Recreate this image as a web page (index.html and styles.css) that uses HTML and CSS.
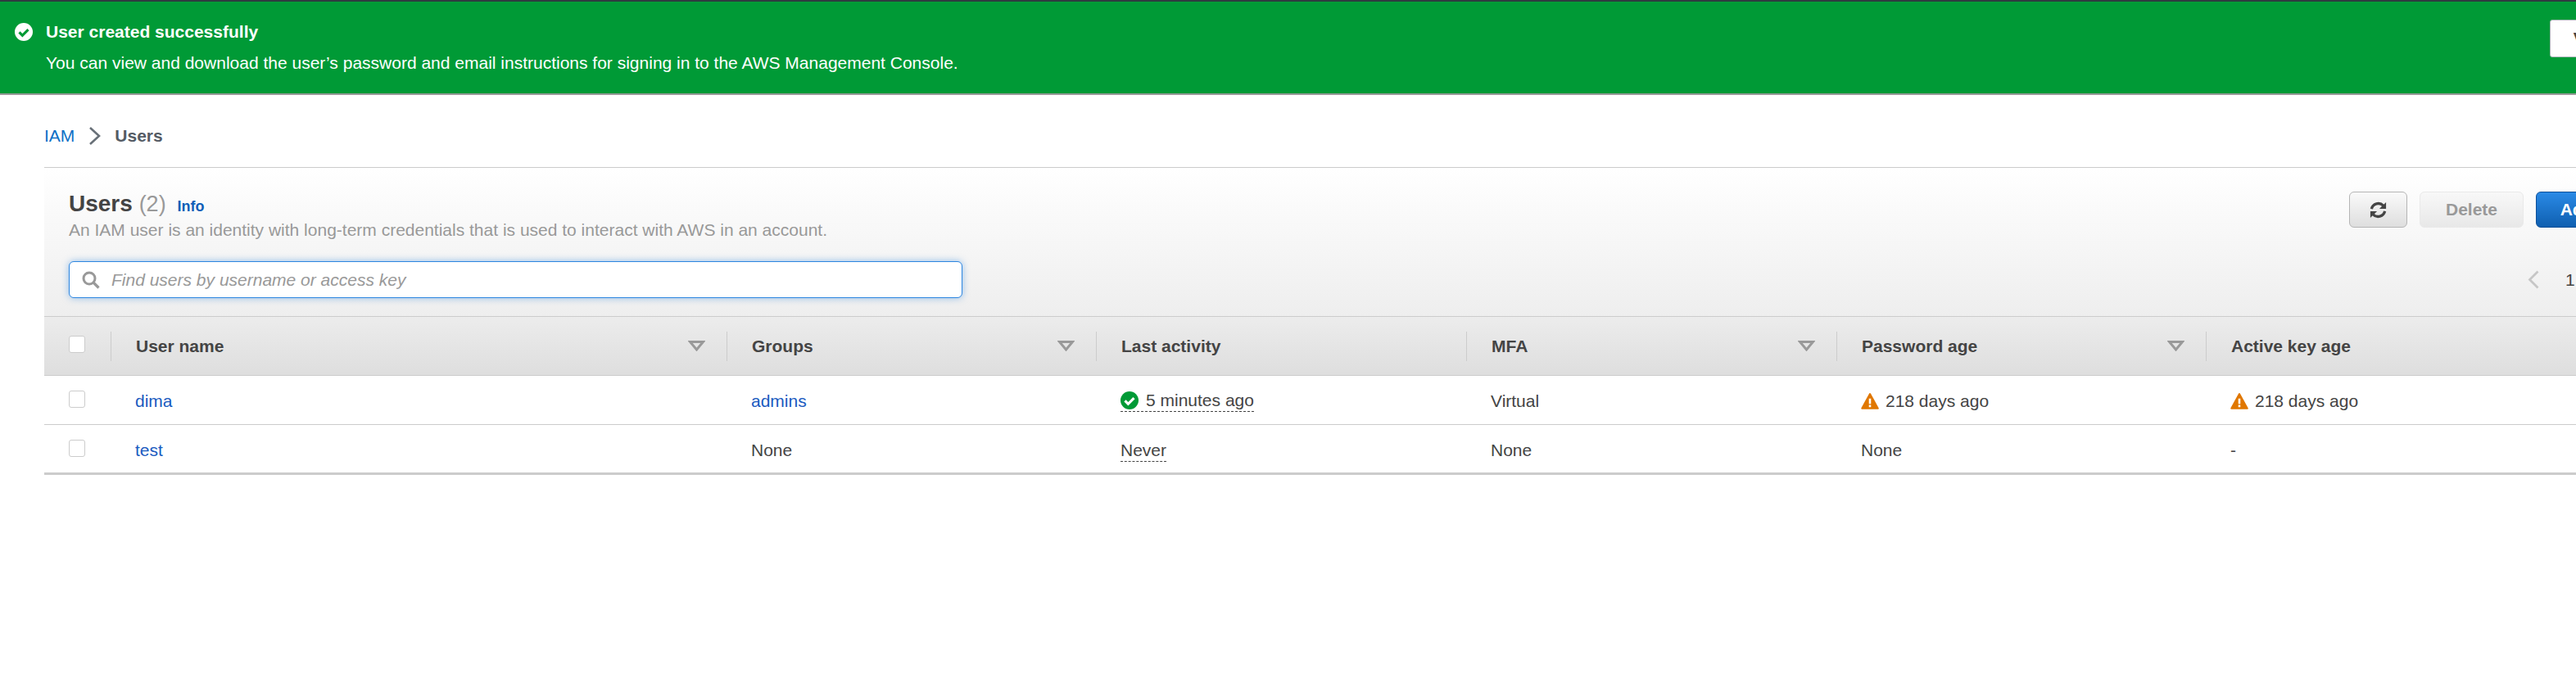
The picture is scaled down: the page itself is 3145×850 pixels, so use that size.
FILE: index.html
```html
<!DOCTYPE html>
<html>
    <head>
        <meta charset="utf-8">
        <title>IAM Users</title>
        <link rel="stylesheet" href="styles.css">
    </head>
    <body>
        <div class="flash">
            <svg class="flash-icon" viewBox="0 0 24 24"><circle cx="12" cy="12" r="12" fill="#fff"/><path d="M6 12.5l4.2 4.2L18 8.8" fill="none" stroke="#009a36" stroke-width="3.4"/></svg>
            <div class="flash-body">
                <div class="flash-title">User created successfully</div>
                <div class="flash-text">You can view and download the user’s password and email instructions for signing in to the AWS Management Console.</div>
            </div>
            <button class="flash-btn">View user</button>
        </div>

        <div class="crumbs">
            <a href="#">IAM</a>
            <svg class="crumb-sep" viewBox="0 0 15 22"><path d="M2 1l11 10L2 21" fill="none" stroke="#687078" stroke-width="2.6"/></svg>
            <span>Users</span>
        </div>

        <div class="panel">
            <div class="panel-head">
                <div class="head-top">
                    <div class="head-intro">
                        <h1>Users <span class="count">(2)</span> <a class="info" href="#">Info</a></h1>
                        <p>An IAM user is an identity with long-term credentials that is used to interact with AWS in an account.</p>
                    </div>
                    <div class="actions">
                        <button class="btn btn-icon"><svg viewBox="0 0 24 24" width="23" height="23"><path d="M3.5 10.5A8.8 8.8 0 0 1 18.5 6.5M20.5 13.5A8.8 8.8 0 0 1 5.5 17.5" fill="none" stroke="#444" stroke-width="3.4"/><path d="M22 2v8.5h-8.5zM2 22v-8.5h8.500z" fill="#444"/></svg></button>
                        <button class="btn btn-off">Delete</button>
                        <button class="btn btn-main">Add users</button>
                    </div>
                </div>
                <div class="head-search">
                    <label class="search">
                        <svg viewBox="0 0 22 22" width="22" height="22"><circle cx="9" cy="9" r="7" fill="none" stroke="#999" stroke-width="3"/><path d="M14 14l6.5 6.5" stroke="#999" stroke-width="3.2"/></svg>
                        <input type="text" placeholder="Find users by username or access key">
                    </label>
                    <div class="pager">
                        <svg viewBox="0 0 14 23" width="14" height="23"><path d="M12.5 1.5L2.5 11.5l10 10" fill="none" stroke="#c6c6c6" stroke-width="2.8"/></svg>
                        <span>1</span>
                    </div>
                </div>
            </div>

            <div class="grid thead">
                <div class="cell-check"><span class="check"></span></div>
                <div class="th">User name<svg class="sort" viewBox="0 0 21 13"><path d="M2.5 1.5h16L10.5 11z" fill="none" stroke="#999" stroke-width="3"/></svg></div>
                <div class="th">Groups<svg class="sort" viewBox="0 0 21 13"><path d="M2.5 1.5h16L10.5 11z" fill="none" stroke="#999" stroke-width="3"/></svg></div>
                <div class="th">Last activity</div>
                <div class="th">MFA<svg class="sort" viewBox="0 0 21 13"><path d="M2.5 1.5h16L10.5 11z" fill="none" stroke="#999" stroke-width="3"/></svg></div>
                <div class="th">Password age<svg class="sort" viewBox="0 0 21 13"><path d="M2.5 1.5h16L10.5 11z" fill="none" stroke="#999" stroke-width="3"/></svg></div>
                <div class="th">Active key age</div>
            </div>

            <div class="grid row">
                <div class="cell-check"><span class="check"></span></div>
                <div class="td"><a href="#">dima</a></div>
                <div class="td"><a href="#">admins</a></div>
                <div class="td"><span class="dotted"><svg class="status" viewBox="0 0 24 24"><circle cx="12" cy="12" r="12" fill="#009a36"/><path d="M6 12.5l4.2 4.2L18 8.8" fill="none" stroke="#fff" stroke-width="3.4"/></svg>5 minutes ago</span></div>
                <div class="td">Virtual</div>
                <div class="td"><svg class="status status-warn" viewBox="0 0 24 22"><path d="M12 1.5L22.5 20.5H1.5z" fill="#e07700" stroke="#e07700" stroke-width="2.5" stroke-linejoin="round"/><path d="M12 7.5v7M12 16v3" stroke="#fff" stroke-width="2.8"/></svg>218 days ago</div>
                <div class="td"><svg class="status status-warn" viewBox="0 0 24 22"><path d="M12 1.5L22.5 20.5H1.5z" fill="#e07700" stroke="#e07700" stroke-width="2.5" stroke-linejoin="round"/><path d="M12 7.5v7M12 16v3" stroke="#fff" stroke-width="2.8"/></svg>218 days ago</div>
            </div>
            <div class="grid row row-last">
                <div class="cell-check"><span class="check"></span></div>
                <div class="td"><a href="#">test</a></div>
                <div class="td">None</div>
                <div class="td"><span class="dotted">Never</span></div>
                <div class="td">None</div>
                <div class="td">None</div>
                <div class="td">-</div>
            </div>
        </div>
    </body>
</html>
```

FILE: styles.css
```css
html, body {
    margin: 0;
    overflow: hidden;
    height: 100%;
}

body {
    background: #fff;
    color: #444;
    font-family: "Liberation Sans", Arial, sans-serif;
    font-size: 21px;
    line-height: 26px;
}

a {
    color: #1a5bbf;
    text-decoration: none;
}

button {
    font-family: inherit;
}

.flash {
    display: flex;
    width: 3330px;
    height: 112px;
    background: #009a36;
    border-top: 2px solid #2f3a40;
    border-bottom: 2px solid #999;
    color: #fff;
}

.flash-icon {
    flex: none;
    width: 22px;
    height: 22px;
    margin: 26px 16px 0 18px;
}

.flash-body {
    width: 3057px;
    padding-top: 24px;
}

.flash-title {
    font-weight: bold;
    margin-bottom: 12px;
}

.flash-btn {
    flex: none;
    width: 155px;
    height: 46px;
    margin-top: 22px;
    border: 1px solid #aab7b8;
    border-radius: 3px;
    background: #fff;
    color: #444;
    font-size: 21px;
    font-weight: bold;
}

.crumbs {
    display: flex;
    align-items: center;
    height: 88px;
    box-sizing: border-box;
    padding: 12px 0 0 54px;
    color: #545b64;
    font-weight: bold;
}

.crumbs a {
    font-weight: normal;
    color: #0f6fc6;
}

.crumb-sep {
    width: 15px;
    height: 22px;
    margin: 0 17px;
}

.panel {
    width: 3234px;
    margin-left: 54px;
    border-top: 1px solid #ccc;
}

.panel-head {
    height: 182px;
    box-sizing: border-box;
    padding: 27px 30px 0;
    background: linear-gradient(#fff, #eee);
    border-bottom: 1px solid #ccc;
}

.head-top {
    display: flex;
    height: 87px;
}

.head-intro {
    flex: 1;
}

h1 {
    margin: 0;
    font-size: 28px;
    font-weight: bold;
    line-height: 34px;
    color: #444;
}

.count {
    font-weight: normal;
    font-size: 27px;
    color: #999;
}

.info {
    margin-left: 6px;
    font-size: 18px;
    font-weight: bold;
    color: #0f5fb8;
}

.head-intro p {
    margin: 0;
    color: #999;
    line-height: 24px;
}

.actions {
    display: flex;
    gap: 15px;
    padding-top: 2px;
}

.btn {
    height: 44px;
    border-radius: 6px;
    font-size: 21px;
    font-weight: bold;
}

.btn-icon {
    display: grid;
    place-items: center;
    width: 71px;
    padding: 0;
    border: 1px solid #b5b5b5;
    background: linear-gradient(#fafafa, #dedede);
}

.btn-off {
    width: 127px;
    border: 1px solid #e9e9e9;
    background: linear-gradient(#f8f8f8, #e8e8e8);
    color: #999;
}

.btn-main {
    width: 162px;
    border: 1px solid #0d4f99;
    background: linear-gradient(#2a8ae6, #0f5fb0);
    color: #fff;
}

.head-search {
    display: flex;
    justify-content: space-between;
    align-items: center;
    height: 45px;
}

.search {
    display: flex;
    align-items: center;
    gap: 14px;
    width: 1091px;
    height: 45px;
    box-sizing: border-box;
    padding-left: 15px;
    background: #fff;
    border: 1px solid #2d86e0;
    border-radius: 6px;
    box-shadow: 0 0 8px rgba(45, 134, 224, 0.5);
}

.search input {
    flex: 1;
    padding: 0;
    border: 0;
    outline: 0;
    background: none;
    font-family: inherit;
    font-size: 21px;
    font-style: italic;
}

.search input::placeholder {
    color: #999;
    opacity: 1;
}

.pager {
    display: flex;
    align-items: center;
    gap: 32px;
    width: 172px;
    color: #444;
}

.grid {
    display: grid;
    grid-template-columns: 81px 752px 451px 452px 452px 451px 451px;
    align-items: center;
}

.thead {
    height: 72px;
    box-sizing: border-box;
    background: linear-gradient(#ececec, #dedede);
    border-bottom: 1px solid #ccc;
    font-weight: bold;
}

.cell-check {
    display: flex;
    padding-left: 30px;
}

.check {
    width: 18px;
    height: 19px;
    background: #fff;
    border: 1px solid #ccc;
    border-radius: 3px;
}

.thead .check {
    margin-top: -4px;
}

.th {
    display: flex;
    justify-content: space-between;
    align-items: center;
    height: 36px;
    box-sizing: border-box;
    padding: 0 26px 0 30px;
    border-left: 1px solid #ccc;
}

.sort {
    width: 21px;
    height: 13px;
}

.row {
    height: 60px;
    box-sizing: border-box;
    border-bottom: 1px solid #ccc;
}

.row-last {
    height: 61px;
    border-bottom-width: 3px;
}

.row .check {
    margin-top: -2px;
}

.td {
    padding: 2px 0 0 30px;
}

.row-last .td {
    padding-top: 4px;
}

.status {
    width: 22px;
    height: 22px;
    margin-right: 9px;
    vertical-align: -4px;
}

.status-warn {
    margin-right: 8px;
}

.dotted {
    display: inline-block;
    line-height: 26px;
    border-bottom: 1px dashed #444;
}
```
